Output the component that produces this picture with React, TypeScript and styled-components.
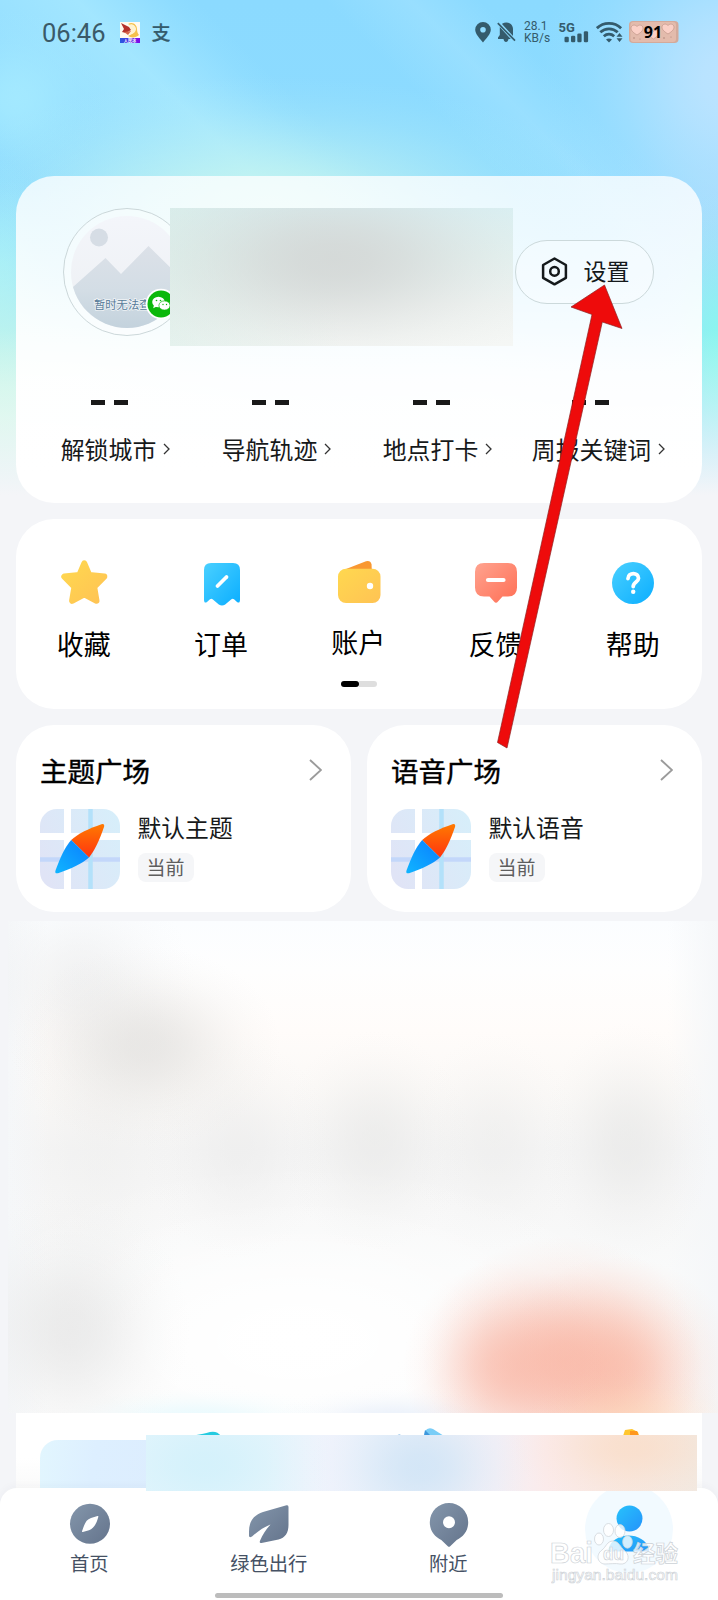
import React from 'react';
import styled, { createGlobalStyle } from 'styled-components';

const GlobalStyle = createGlobalStyle`
  * { box-sizing: border-box; }
  body {
    margin: 0;
    background: #f4f5f8;
    font-family: "Noto Sans CJK SC", "Noto Sans", sans-serif;
    color: #111;
  }
`;

// Soft elliptical spot with a bell-shaped falloff.
const spot = (rx: number, ry: number, x: number, y: number, rgb: string, alpha: number) => {
  const stops = [1, 0.94, 0.78, 0.56, 0.35, 0.18, 0.07, 0]
    .map((k, i) => `rgba(${rgb}, ${(k * alpha).toFixed(3)}) ${((i * 100) / 7).toFixed(1)}%`)
    .join(', ');
  return `radial-gradient(ellipse ${rx}px ${ry}px at ${x}px ${y}px, ${stops})`;
};

const Page = styled.div`
  position: relative;
  width: 718px;
  height: 1600px;
  overflow: hidden;
  display: flex;
  flex-direction: column;
  background:
    linear-gradient(180deg, rgba(244, 245, 248, 0) 330px, rgba(244, 245, 248, 0.45) 410px, #f4f5f8 495px),
    ${spot(60, 170, 718, 360, '138, 246, 238', 1)},
    ${spot(400, 240, 0, 420, '205, 250, 232', 1)},
    ${spot(60, 120, 0, 275, '165, 242, 250', 0.7)},
    ${spot(350, 130, 265, 205, '200, 246, 238', 0.85)},
    ${spot(190, 210, 730, 80, '190, 228, 255', 0.95)},
    ${spot(120, 150, 718, 240, '170, 220, 252', 0.8)},
    ${spot(90, 90, 15, 100, '168, 236, 255', 0.75)},
    linear-gradient(45deg, rgba(172, 238, 255, 0) 200px, rgba(172, 238, 255, 0) 250px, rgba(178, 238, 255, 0.6) 415px, rgba(172, 238, 255, 0.1) 480px, rgba(172, 238, 255, 0) 500px),
    linear-gradient(45deg, rgba(172, 230, 255, 0) 590px, rgba(172, 230, 255, 0.4) 650px, rgba(172, 230, 255, 0) 700px),
    linear-gradient(#8bdaff, #90deff);
  background-size: 718px 510px;
  background-repeat: no-repeat;
  background-color: #f4f5f8;
`;

const StatusBar = styled.header`
  height: 176px;
  flex: none;
  padding: 19px 39px 0 42px;
  display: flex;
  justify-content: space-between;
  align-items: flex-start;
  color: #345b6c;
`;

const StatusGroup = styled.div<{ $gap: number }>`
  display: flex;
  align-items: center;
  gap: ${p => p.$gap}px;
  height: 26px;
`;

const Clock = styled.span`
  font: 400 25.5px/28px Roboto, sans-serif;
  color: #3a5a68;
  width: 66.5px;
  padding-top: 2px;
  white-space: nowrap;
`;

const Speed = styled.span`
  font: 400 12px/11.5px Roboto, sans-serif;
  width: 26px;
  margin: 1px 0 0 1.5px;
  white-space: nowrap;
`;

const NetworkType = styled.span`
  align-self: flex-start;
  width: 7px;
  margin: 1px -8px 0 2px;
  font: 700 13px/15px Roboto, sans-serif;
  white-space: nowrap;
`;

const PayMark = styled.span`
  font-size: 19px;
  line-height: 22px;
  font-weight: 500;
  -webkit-text-stroke: 0.2px currentColor;
`;

const Battery = styled.div`
  position: relative;
  width: 50px;
  height: 22px;
`;

const BatteryText = styled.span`
  position: absolute;
  inset: 0;
  text-align: center;
  font: 700 16px/22px "Open Sans", sans-serif;
  color: #000;
  padding-right: 2px;
`;

const Content = styled.main`
  height: 1312px;
  flex: none;
  overflow: hidden;
  padding: 0 16px;
`;

const ProfileCard = styled.section`
  height: 327px;
  border-radius: 38px;
  padding: 32px 20px 0 19px;
  background: linear-gradient(180deg, rgba(255, 255, 255, 0.78) 0, rgba(255, 255, 255, 0.86) 100px, rgba(255, 255, 255, 0.97) 200px, #fff 300px);
`;

const ProfileTop = styled.div`
  position: relative;
  height: 138px;
  display: flex;
  justify-content: space-between;
  padding: 0 28px;
`;

const Mosaic = styled.div`
  position: absolute;
  left: 135px;
  top: 0;
  width: 343px;
  height: 138px;
  background:
    ${spot(240, 115, 165, 52, '210, 213, 212', 0.85)},
    linear-gradient(90deg, rgba(218, 238, 232, 0.6), rgba(235, 240, 238, 0) 50%),
    linear-gradient(180deg, #daf0f3 0%, #e5f3f1 35%, #f0f4f2 70%, #f5f7f5 100%);
`;

const SettingsButton = styled.button`
  margin-top: 31.5px;
  width: 139px;
  height: 64px;
  border-radius: 32px;
  border: 1px solid #ccd9db;
  background: rgba(255, 255, 255, 0.3);
  display: flex;
  align-items: center;
  padding: 0 0 0 25px;
  gap: 15.5px;
  color: #15191b;
`;

const SettingsLabel = styled.span`
  font: 400 23px/32px "Noto Sans CJK SC", sans-serif;
  margin-top: -4px;
`;

const Stats = styled.div`
  display: grid;
  grid-template-columns: repeat(4, 161px);
`;

const Stat = styled.div`
  display: flex;
  flex-direction: column;
  align-items: center;
  padding-top: 54px;
`;

const Dashes = styled.div<{ $shift: number }>`
  display: flex;
  gap: 9px;
  margin-right: ${p => p.$shift}px;
  &::before, &::after {
    content: "";
    width: 14px;
    height: 4.5px;
    background: #191919;
  }
`;

const StatLabel = styled.div`
  display: flex;
  align-items: center;
  gap: 7px;
  margin-top: 26.5px;
  font-size: 23.9px;
  line-height: 36px;
  white-space: nowrap;
  color: #17191a;
  svg { margin-top: -1px; }
`;

const ShortcutCard = styled.section`
  margin-top: 16px;
  height: 190px;
  border-radius: 38px;
  background: #fff;
`;

const Shortcuts = styled.div`
  display: grid;
  grid-template-columns: repeat(5, 1fr);
  height: 162px;
`;

const Shortcut = styled.div<{ $lift?: number }>`
  display: flex;
  flex-direction: column;
  align-items: center;
  padding-top: 40px;
  font-size: 27px;
  line-height: 40px;
  color: #000;
  svg { margin-bottom: ${p => 18.5 - (p.$lift ?? 0)}px; flex: none; overflow: visible; }
`;

const ShortcutLabel = styled.span`
  margin-right: 1.5px;
`;

const Pager = styled.div`
  width: 36px;
  height: 6px;
  border-radius: 3px;
  margin: 0 auto;
  background: linear-gradient(90deg, transparent 50%, #dedede 50%);
  &::before {
    content: "";
    display: block;
    width: 18px;
    height: 6px;
    border-radius: 3px;
    background: #000;
  }
`;

const Plazas = styled.div`
  display: grid;
  grid-template-columns: 1fr 1fr;
  gap: 16px;
  margin-top: 16px;
`;

const Plaza = styled.section`
  height: 187px;
  border-radius: 38px;
  background: #fff;
  padding: 25px 29px 0 24px;
`;

const PlazaHead = styled.div`
  display: flex;
  justify-content: space-between;
  align-items: center;
  height: 40px;
  font-size: 27.5px;
  font-weight: 400;
  -webkit-text-stroke: 0.4px #000;
  color: #000;
`;

const PlazaBody = styled.div`
  display: flex;
  gap: 18px;
  margin: 19px 0 0 -0.5px;
`;

const PlazaName = styled.div`
  font-size: 23.8px;
  line-height: 34px;
  margin-top: 0.5px;
  color: #17191a;
`;

const Tag = styled.span`
  display: block;
  width: 56px;
  height: 29px;
  margin-top: 9.5px;
  border-radius: 8px;
  background: #f5f6f8;
  color: #5e5e5e;
  font-size: 19px;
  line-height: 28px;
  text-align: center;
`;

const Haze = styled.section`
  margin: 9px -16px 0 -8px;
  height: 492px;
  background:
    ${spot(110, 60, 625, 505, '255, 212, 172', 0.45)},
    ${spot(100, 105, 495, 446, '249, 180, 162', 0.6)},
    ${spot(140, 125, 555, 440, '249, 180, 162', 0.75)},
    ${spot(120, 115, 610, 450, '251, 188, 168', 0.75)},
    ${spot(140, 30, 190, 497, '226, 249, 254', 0.7)},
    ${spot(120, 30, 385, 497, '230, 238, 250', 0.75)},
    ${spot(120, 135, 62, 408, '228, 228, 228', 0.7)},
    ${spot(135, 100, 138, 125, '226, 225, 223', 0.75)},
    ${spot(115, 105, 72, 60, '230, 231, 232', 0.5)},
    ${spot(100, 190, 90, 225, '235, 235, 234', 0.35)},
    ${spot(95, 110, 230, 228, '232, 232, 232', 0.45)},
    ${spot(95, 110, 367, 220, '230, 230, 229', 0.55)},
    ${spot(85, 110, 486, 222, '232, 232, 231', 0.4)},
    ${spot(85, 120, 619, 222, '230, 230, 229', 0.6)},
    linear-gradient(90deg, #f5f7f9 0, rgba(245, 247, 249, 0) 40px, rgba(245, 247, 249, 0) 660px, #f5f7f9 100%),
    ${spot(400, 190, 290, 420, '255, 255, 255', 1)},
    linear-gradient(180deg, #fbfdff 0, #fefefe 50px, #fffcfa 110px, #fbf9f7 165px, #f5f5f5 230px, #f7f7f7 290px, #f9fafa 350px, #fbfbfb 492px);
`;

const Services = styled.section`
  position: relative;
  height: 75px;
  background: linear-gradient(180deg, #fff 45px, #fafafa 75px);
`;

const ServiceTile = styled.div`
  position: absolute;
  left: 24px;
  top: 27px;
  width: 180px;
  height: 60px;
  border-radius: 18px 0 0 0;
  background: linear-gradient(100deg, #e2f6fe, #ddefff 30%, #dcebfd);
`;

const ServiceGlyphs = styled.svg`
  position: absolute;
  left: 0;
  top: 0;
`;

const BottomNav = styled.nav`
  position: relative;
  height: 112px;
  flex: none;
  border-radius: 17px 17px 0 0;
  background: #fff;
  box-shadow: 0 -2px 8px rgba(60, 70, 90, 0.035);
  display: grid;
  grid-template-columns: repeat(4, 1fr);
`;

const ServiceMosaic = styled.div`
  position: absolute;
  z-index: 1;
  left: 146px;
  top: -53px;
  width: 551px;
  height: 56px;
  background:
    ${spot(110, 90, 275, 32, '207, 228, 246', 0.85)},
    ${spot(120, 80, 60, 30, '211, 241, 251', 0.9)},
    ${spot(120, 60, 485, 12, '250, 220, 198', 0.7)},
    linear-gradient(90deg, #e2f5fc 0, #e5f5fc 120px, #f0f3fc 185px, #eef3fb 230px, #f4f0f6 350px, #fbebeb 400px, #f8e8e0 480px, #f2e9e1 551px);
`;

const NavItem = styled.div`
  display: flex;
  flex-direction: column;
  align-items: center;
  padding-top: 13px;
  font-size: 19.3px;
  line-height: 28px;
  color: #455164;
  svg { margin-bottom: 1.5px; flex: none; }
`;

const NavLabel = styled.span`
  margin-right: 1px;
`;

const ActiveBubble = styled.div`
  width: 88px;
  height: 88px;
  margin: -16px 0 0 1px;
  border-radius: 50%;
  background: #f2faff;
  display: flex;
  justify-content: center;
  padding-top: 19.5px;
`;

const HomeIndicator = styled.div`
  position: absolute;
  left: 215px;
  top: 105px;
  width: 288px;
  height: 5px;
  border-radius: 3px;
  background: #bcbcbc;
`;

const Watermark = styled.div`
  position: absolute;
  z-index: 2;
  left: 551px;
  top: 1521px;
`;

const PointerArrow = styled.svg`
  position: absolute;
  left: 0;
  top: 0;
  pointer-events: none;
`;

const StatusIcons = {
  App: () => (
    <svg width="20" height="21" viewBox="0 0 20 21">
      <defs><linearGradient id="appStrip"><stop stopColor="#275be0" /><stop offset="1" stopColor="#8208e8" /></linearGradient></defs>
      <path d="M0 0h20v21H0z" fill="#fffaf0" />
      <path d="M8 2c5-3 9 1 9 5 0 3 1 5 2 6-3 3-8 3-11 1l4-2c3-1 4-4 2-7z" fill="#f5c24d" />
      <path d="M9 3c3-2 7 1 7 4s-3 5-7 5c2-3 2-6 0-9z" fill="#fff3d0" />
      <path d="M1 1l8 4 2 3-5 3-4-1 2-3z" fill="#b5322c" />
      <path d="M4 10l7-1-3 4z" fill="#d7664a" />
      <path d="M0 16h20v5H0z" fill="url(#appStrip)" />
      <text x="10" y="20" fontSize="4.2" fontWeight="700" textAnchor="middle" fill="#fff">人民冰</text>
    </svg>
  ),
  Pin: () => (
    <svg width="16" height="21" viewBox="0 0 16 21"><path fillRule="evenodd" d="M8 0a7.8 7.8 0 0 0-7.8 7.8C.2 12 5 17 8 20.5c3-3.500 7.800-8.500 7.800-12.700A7.800 7.800 0 0 0 8 0zm0 5a2.800 2.800 0 1 1 0 5.600A2.800 2.800 0 0 1 8 5z" fill="currentColor" /></svg>
  ),
  Bell: () => (
    <svg width="19" height="20" viewBox="0 0 19 20">
      <path d="M5.500 1.500C9.500-1 16 1 16 7v7L5 2zM2.800 5L13.800 17H1v-1.600l1.800-2.400zM6.500 17h5c-.3 2-1.300 3-2.500 3s-2.200-1-2.500-3z" fill="currentColor" />
      <path d="M.8 1.200L18 18.700" stroke="currentColor" strokeWidth="1.700" />
    </svg>
  ),
  Bars: () => (
    <svg width="25" height="22" viewBox="0 0 25 22">
      {[[0.5, 5.5], [7, 6.5], [13.3, 8.8], [19.8, 11]].map(([x, h]) => (
        <rect key={x} x={x} y={21.3 - h} width="4.300" height={h} rx="1.300" fill="currentColor" />
      ))}
    </svg>
  ),
  Wifi: () => (
    <svg width="27" height="21" viewBox="0 0 27 21">
      <g fill="none" stroke="currentColor" strokeWidth="2.800">
        <path d="M.9 6.200C7.500-.2 18.500-.2 25.100 6.200" />
        <path d="M4.300 10.300c5-4.600 12.400-4.600 17.400 0" />
        <path d="M7.800 14.200c3-2.600 7.400-2.600 10.400 0" />
      </g>
      <path d="M10 17.500c1.700-1.500 4.300-1.500 6 0L13 20.500z" fill="currentColor" />
      <path d="M20.500 14.800l3-3.800 3 3.800zM20.500 16.300h6l-3 3.800z" fill="currentColor" />
    </svg>
  ),
};

const Heart = ({ x, y, s = 1 }: { x: number; y: number; s?: number }) => (
  <path transform={`translate(${x} ${y}) scale(${s})`} d="M6 10C2 7.500 0 5.500 0 3.200 0 0 4 -1 6 1.600 8-1 12 0 12 3.200 12 5.500 10 7.500 6 10z" fill="#fbd0c6" stroke="#b98d80" strokeWidth=".6" />
);

const BatteryIcon = () => (
  <Battery>
    <svg width="50" height="22" viewBox="0 0 50 22">
      <rect width="49.500" height="22" rx="4" fill="#d3aa9b" />
      <rect x="1.500" y="1" width="45.500" height="20" rx="3" fill="#e3bbac" />
      <Heart x={2} y={4} /><Heart x={33} y={3} /><Heart x={19} y={9} s={0.9} />
      <g fill="#b0847a"><circle cx="5" cy="17" r=".8" /><circle cx="11" cy="18" r=".6" /><circle cx="35" cy="17" r=".8" /><circle cx="42" cy="16" r=".6" /></g>
    </svg>
    <BatteryText>91</BatteryText>
  </Battery>
);

const Avatar = () => (
  <svg width="128" height="128" viewBox="0 0 128 128">
    <defs>
      <linearGradient id="avatarSky" x2="0" y2="1"><stop stopColor="#f4f6fb" /><stop offset="1" stopColor="#eceff2" /></linearGradient>
      <linearGradient id="avatarHill" x2="0" y2="1"><stop stopColor="#dce1e8" /><stop offset=".5" stopColor="#d3dde5" /><stop offset="1" stopColor="#c0d0db" /></linearGradient>
      <clipPath id="avatarClip"><circle cx="64" cy="64" r="56" /></clipPath>
    </defs>
    <circle cx="64" cy="64" r="63.500" fill="rgba(255,255,255,.3)" stroke="#c6d3d5" strokeWidth=".9" />
    <g clipPath="url(#avatarClip)">
      <path d="M0 0h128v128H0z" fill="url(#avatarSky)" />
      <circle cx="36" cy="29.500" r="9" fill="#d6dde5" />
      <path d="M0 88L42.500 50 58 66 85.500 38 128 80v48H0z" fill="url(#avatarHill)" />
      <text x="31" y="101" fontSize="11.300" fill="#567a98" stroke="#fff" strokeOpacity=".7" strokeWidth="1.600" paintOrder="stroke">暂时无法查看</text>
    </g>
    <circle cx="98" cy="96" r="15.300" fill="#fff" />
    <circle cx="98" cy="96" r="13.500" fill="#0bb80b" />
    <ellipse cx="95.500" cy="94" rx="6.300" ry="5.300" fill="#fff" />
    <path d="M91 97l-.8 3.200 3.500-1.700z" fill="#fff" />
    <ellipse cx="101.500" cy="97.500" rx="5.600" ry="4.600" fill="#fff" stroke="#0bb80b" strokeWidth=".7" />
    <g fill="#0bb80b"><circle cx="93.500" cy="92.500" r=".8" /><circle cx="97.500" cy="92.500" r=".8" /><circle cx="100" cy="96.500" r=".7" /><circle cx="103.500" cy="96.500" r=".7" /></g>
  </svg>
);

const HexIcon = () => (
  <svg width="27" height="29" viewBox="0 0 27 29" fill="none" stroke="#15191b">
    <path d="M13.500 1.500L24.900 8v12.800L13.500 27.300 2.100 20.800V8z" strokeWidth="2.500" strokeLinejoin="round" />
    <circle cx="13.500" cy="14.400" r="4.300" strokeWidth="2.500" />
  </svg>
);

const Chevron = ({ w, h, color, stroke }: { w: number; h: number; color: string; stroke: number }) => (
  <svg width={w} height={h} viewBox={`0 0 ${w} ${h}`} fill="none">
    <path d={`M1 1L${w - 1} ${h / 2}L1 ${h - 1}`} stroke={color} strokeWidth={stroke} />
  </svg>
);

const ShortcutIcon = ({ kind }: { kind: string }) => (
  <svg width="48" height="46" viewBox="0 0 48 46">
    <defs>
      <linearGradient id="gold" x2="1" y2="1"><stop stopColor="#ffd84f" /><stop offset="1" stopColor="#ffc354" /></linearGradient>
      <linearGradient id="blue" x2="1" y2="1"><stop stopColor="#4ad0ff" /><stop offset="1" stopColor="#0baeff" /></linearGradient>
      <linearGradient id="coral" x2="1" y2="1"><stop stopColor="#ffa38f" /><stop offset="1" stopColor="#ff6f55" /></linearGradient>
    </defs>
    {kind === 'star' && (
      <path d="M23.300 4.300l5 11.800L43.300 17.600 33.200 27.900 35.500 41.800 23.300 35.300 11.100 41.800l2.300-13.900L3.300 17.600l15-1.500z" fill="url(#gold)" stroke="url(#gold)" strokeWidth="6" strokeLinejoin="round" />
    )}
    {kind === 'order' && (
      <>
        <path d="M13 4h22q7 0 7 7v29.500q0 4.500-3 2.500l-3-2.800q-1.300-1-2.600 0l-6.200 5.200q-3.200 2.200-6.400 0l-6.200-5.200q-1.300-1-2.600 0l-3 2.800q-3 2-3-2.500V11q0-7 7-7z" fill="url(#blue)" />
        <path d="M19.500 27l9-9" stroke="#fff" strokeWidth="3.800" strokeLinecap="round" />
      </>
    )}
    {kind === 'wallet' && (
      <>
        <path d="M11 10l20-7.800q4.500-1 5.500 3l.5 9z" fill="#f99831" />
        <rect x="3" y="9.700" width="42.500" height="34.300" rx="8" fill="url(#gold)" />
        <circle cx="35" cy="27" r="3.200" fill="#fff" />
      </>
    )}
    {kind === 'feedback' && (
      <>
        <path d="M12 4h24q9 0 9 9v15.500q0 9-9 9h-5.500l-4.500 5q-2 2.500-4 0l-4.500-5H12q-9 0-9-9V13q0-9 9-9z" fill="url(#coral)" />
        <path d="M16 21h15.500" stroke="#fff" strokeWidth="4.200" strokeLinecap="round" />
      </>
    )}
    {kind === 'help' && (
      <>
        <circle cx="24" cy="24" r="21" fill="url(#blue)" />
        <path d="M19 19.500c.3-6.500 10.500-6.500 10.500-.3 0 3.800-5.300 3.700-5.300 8.300" fill="none" stroke="#fff" strokeWidth="3.800" strokeLinecap="round" />
        <circle cx="24.200" cy="32.700" r="2.200" fill="#fff" />
      </>
    )}
  </svg>
);

const MapIcon = ({ id }: { id: string }) => (
  <svg width="80" height="80" viewBox="0 0 80 80">
    <defs>
      <linearGradient id={`${id}bg`} x1="0" y1=".7" x2="1" y2=".2"><stop stopColor="#e0e4f6" /><stop offset="1" stopColor="#d7eefa" /></linearGradient>
      <linearGradient id={`${id}red`} x2="0" y2="1"><stop stopColor="#ff7a00" /><stop offset="1" stopColor="#ff3410" /></linearGradient>
      <linearGradient id={`${id}blue`} x1="1" x2="0" y2="1"><stop stopColor="#0a7fff" /><stop offset="1" stopColor="#10b5ff" /></linearGradient>
      <clipPath id={`${id}clip`}><rect width="80" height="80" rx="17" /></clipPath>
    </defs>
    <g clipPath={`url(#${id}clip)`}>
      <path d="M0 0h80v80H0z" fill={`url(#${id}bg)`} />
      <path d="M0 50.500h80" stroke="#c3d7fa" strokeWidth="4.500" />
      <path d="M50.500 0v80" stroke="#b3e1fa" strokeWidth="4.500" />
      <path d="M0 27.500h80M27.500 0v80" stroke="#fff" strokeWidth="7" />
    </g>
    <path d="M31.200 31C38 24.500 49 19.500 61.500 15.200Q65 14.500 64 18C60 29.500 55.500 40.500 49 48.500z" fill={`url(#${id}red)`} />
    <path d="M31.200 31L49 48.500C42 54.500 31 60 18 64.200Q14.500 65 15.500 61.500C20 49.500 24.500 38.500 31.200 31z" fill={`url(#${id}blue)`} />
  </svg>
);

const NavIcon = ({ kind }: { kind: string }) => (
  <svg width="44" height="46" viewBox="0 0 44 46">
    <defs><linearGradient id="slate" x2="1" y2="1"><stop stopColor="#8496ab" /><stop offset="1" stopColor="#64748c" /></linearGradient></defs>
    {kind === 'home' && (
      <>
        <circle cx="22" cy="22.800" r="20" fill="url(#slate)" />
        <path d="M29.500 15q1.200-.3.800 1C28.500 22.500 26 27.500 21 29.300L14.800 31q-1 0-.7-1C16.500 23 18 18.500 23 17z" fill="#fff" />
      </>
    )}
    {kind === 'leaf' && (
      <path d="M39.500 4.300q2-.5 2 1.700v18c0 8-3.500 13-10 14.500L14.500 42q-2.500.4-1.500-2.200c2.500-6 5.500-10.800 10.500-16.400-6.500 2.500-13 7-18.500 12q-3 2-3-1v-4C2 20 7 14 16 11z" fill="url(#slate)" />
    )}
    {kind === 'pin' && (
      <path fillRule="evenodd" d="M22 2a19.200 19.200 0 0 0-19.200 19.200c0 9 5 14.500 11.500 17.800l6.500 6.200q1.200 1 2.400 0l6.500-6.200c6.500-3.300 11.500-8.800 11.500-17.800A19.200 19.200 0 0 0 22 2zm0 13.200a6 6 0 1 1 0 12 6 6 0 0 1 0-12z" fill="url(#slate)" />
    )}
  </svg>
);

const PersonIcon = () => (
  <svg width="44" height="48" viewBox="0 0 44 48">
    <defs><linearGradient id="person" x2="1" y2="1"><stop stopColor="#27c2fb" /><stop offset="1" stopColor="#2493fb" /></linearGradient></defs>
    <circle cx="22.500" cy="13.500" r="13" fill="url(#person)" />
    <path d="M1.500 44C6 26 37 26 42 44q.5 2.500-2 2.500H3.500q-2.500 0-2-2.500z" fill="url(#person)" />
  </svg>
);

const stats = [
  { label: '解锁城市', shift: 13 },
  { label: '导航轨迹', shift: 13 },
  { label: '地点打卡', shift: 13 },
  { label: '周报关键词', shift: 17 },
];
const shortcuts = [
  { icon: 'star', label: '收藏' },
  { icon: 'order', label: '订单' },
  { icon: 'wallet', label: '账户', lift: 2 },
  { icon: 'feedback', label: '反馈' },
  { icon: 'help', label: '帮助' },
];
const plazas = [
  { id: 'theme', title: '主题广场', name: '默认主题' },
  { id: 'voice', title: '语音广场', name: '默认语音' },
];
const tabs = [
  { icon: 'home', label: '首页' },
  { icon: 'leaf', label: '绿色出行' },
  { icon: 'pin', label: '附近' },
];

export default function App() {
  return (
    <Page>
      <GlobalStyle />
      <StatusBar>
        <StatusGroup $gap={11.5}>
          <Clock>06:46</Clock>
          <StatusIcons.App />
          <PayMark>支</PayMark>
        </StatusGroup>
        <StatusGroup $gap={6.5}>
          <StatusIcons.Pin />
          <StatusIcons.Bell />
          <Speed>28.1<br />KB/s</Speed>
          <NetworkType>5G</NetworkType>
          <StatusIcons.Bars />
          <StatusIcons.Wifi />
          <BatteryIcon />
        </StatusGroup>
      </StatusBar>

      <Content>
        <ProfileCard>
          <ProfileTop>
            <Avatar />
            <Mosaic />
            <SettingsButton><HexIcon /><SettingsLabel>设置</SettingsLabel></SettingsButton>
          </ProfileTop>
          <Stats>
            {stats.map(s => (
              <Stat key={s.label}>
                <Dashes $shift={s.shift} />
                <StatLabel>{s.label}<Chevron w={7} h={12} color="#333" stroke={1.3} /></StatLabel>
              </Stat>
            ))}
          </Stats>
        </ProfileCard>

        <ShortcutCard>
          <Shortcuts>
            {shortcuts.map(s => (
              <Shortcut key={s.icon} $lift={s.lift}>
                <ShortcutIcon kind={s.icon} />
                <ShortcutLabel>{s.label}</ShortcutLabel>
              </Shortcut>
            ))}
          </Shortcuts>
          <Pager />
        </ShortcutCard>

        <Plazas>
          {plazas.map(p => (
            <Plaza key={p.id}>
              <PlazaHead>{p.title}<Chevron w={13} h={22} color="#9b9b9b" stroke={1.9} /></PlazaHead>
              <PlazaBody>
                <MapIcon id={p.id} />
                <div><PlazaName>{p.name}</PlazaName><Tag>当前</Tag></div>
              </PlazaBody>
            </Plaza>
          ))}
        </Plazas>

        <Haze />
        <Services>
          <ServiceTile />
          <ServiceGlyphs width="686" height="24" viewBox="0 0 686 24">
            <path d="M174 23q14-2 20-4 7-1.500 11 4z" fill="#25cbe0" />
            <path d="M408 23l1-5q3-4 8-2l11 7z" fill="#79cdf7" /><path d="M409 17l6 6h-7z" fill="#3e97dc" />
            <path d="M380 23q3-3 7 0z" fill="#5a9fdc" />
            <path d="M607 23l2-6 7-1 6 3 1 4z" fill="#ffc62e" /><path d="M614 18h7l2 5h-9z" fill="#ff971e" />
            <path d="M630 23q3-2 5 0z" fill="#ffb45c" />
          </ServiceGlyphs>
        </Services>
      </Content>

      <BottomNav>
        <ServiceMosaic />
        {tabs.map(t => (
          <NavItem key={t.icon}><NavIcon kind={t.icon} /><NavLabel>{t.label}</NavLabel></NavItem>
        ))}
        <NavItem><ActiveBubble><PersonIcon /></ActiveBubble></NavItem>
        <HomeIndicator />
      </BottomNav>

      <Watermark>
        <svg width="136" height="66" viewBox="0 0 136 66">
          <g fill="#fff" fillOpacity=".8" stroke="#d0d5da" strokeWidth=".8">
            <ellipse cx="48" cy="18" rx="4.500" ry="6" /><ellipse cx="57.500" cy="9" rx="5" ry="6.500" />
            <ellipse cx="69" cy="10" rx="5" ry="6.500" /><ellipse cx="76.500" cy="21" rx="4.800" ry="6.200" />
            <path d="M62 20c-6 0-7 6-11 9-7 5-4 14 3 14 5 0 10-1 15 0 8 1 11-8 5-13-5-4-6-10-12-10z" />
          </g>
          <g fill="#fff" fillOpacity=".8" stroke="#ccd1d6" strokeWidth=".7" fontFamily="Liberation Sans, sans-serif" fontWeight="700">
            <text x="-1" y="42" fontSize="30" textLength="43" lengthAdjust="spacingAndGlyphs">Bai</text>
            <text x="52" y="39" fontSize="18" textLength="21" lengthAdjust="spacingAndGlyphs">du</text>
            <text x="82" y="41" fontSize="22.500" fontFamily="Noto Sans CJK SC, sans-serif">经验</text>
            <text x="1" y="59" fontSize="15" fontWeight="400" strokeWidth=".6" textLength="126" lengthAdjust="spacingAndGlyphs">jingyan.baidu.com</text>
          </g>
        </svg>
      </Watermark>

      <PointerArrow width="718" height="800" viewBox="0 0 718 800">
        <path d="M604.500 285L622 328.500 602.300 322 507 748 497.500 742.500 592 314.500 571 307z" fill="#ee0b0b" stroke="#8e2222" strokeWidth=".7" />
      </PointerArrow>
    </Page>
  );
}
